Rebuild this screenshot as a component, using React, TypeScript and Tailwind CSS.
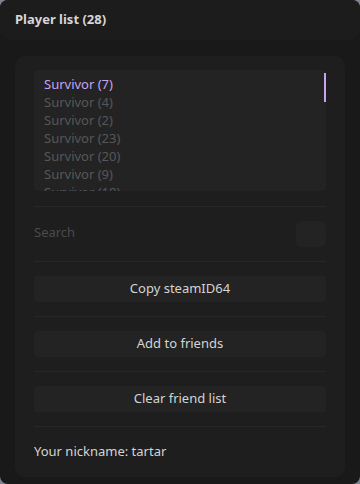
import React from "react";

const PLAYERS = [
    { name: "Survivor (7)", selected: true },
    { name: "Survivor (4)", selected: false },
    { name: "Survivor (2)", selected: false },
    { name: "Survivor (23)", selected: false },
    { name: "Survivor (20)", selected: false },
    { name: "Survivor (9)", selected: false },
    { name: "Survivor (18)", selected: false },
];

const ACTIONS = ["Copy steamID64", "Add to friends", "Clear friend list"];

export default function App() {
    return (
        <div className="w-[360px] h-[484px] bg-[#7d838d] font-['Noto_Sans',sans-serif] text-[13px]">
            <div className="h-full rounded-lg bg-[#191919] flex flex-col overflow-hidden">
                {/* Title bar */}
                <div className="h-10 shrink-0 rounded-b-xl bg-[#1c1c1c] flex items-center px-[15px]">
                    <span className="font-bold text-[#d6d6d6]">Player list (28)</span>
                </div>

                {/* Panel */}
                <div className="mx-[15px] mt-4 rounded-[10px] bg-[#1e1e1e] px-[19px] pt-[14px] pb-2">
                    {/* Player listbox */}
                    <div className="relative h-[121px] overflow-hidden rounded bg-[#232323] pl-[10px] pt-[5px]">
                        {PLAYERS.map((p) => (
                            <div
                                key={p.name}
                                className={`h-[18px] leading-[18px] ${p.selected ? "text-[#c7a4f2]" : "text-[#575757]"}`}
                            >
                                {p.name}
                            </div>
                        ))}
                        <div className="absolute right-0 top-[3px] w-[2px] h-[29px] bg-[#c7a4f2]" />
                    </div>

                    <div className="mt-[15px] h-px bg-[#272727]" />

                    {/* Search */}
                    <div className="py-[14px] flex items-center justify-between border-b border-[#272727]">
                        <span className="text-[#4a4a4a] -mt-[2px]">Search</span>
                        <div className="w-[30px] h-[26px] rounded-md bg-[#232323]" />
                    </div>

                    {ACTIONS.map((label) => (
                        <div key={label} className="py-[14px] border-b border-[#272727]">
                            <button className="w-full h-[26px] rounded bg-[#232323] text-[#d4d4d4]">
                                {label}
                            </button>
                        </div>
                    ))}

                    <div className="pt-[15px] pb-[9px] leading-[18px] text-[#d4d4d4]">Your nickname: tartar</div>
                </div>
            </div>
        </div>
    );
}
